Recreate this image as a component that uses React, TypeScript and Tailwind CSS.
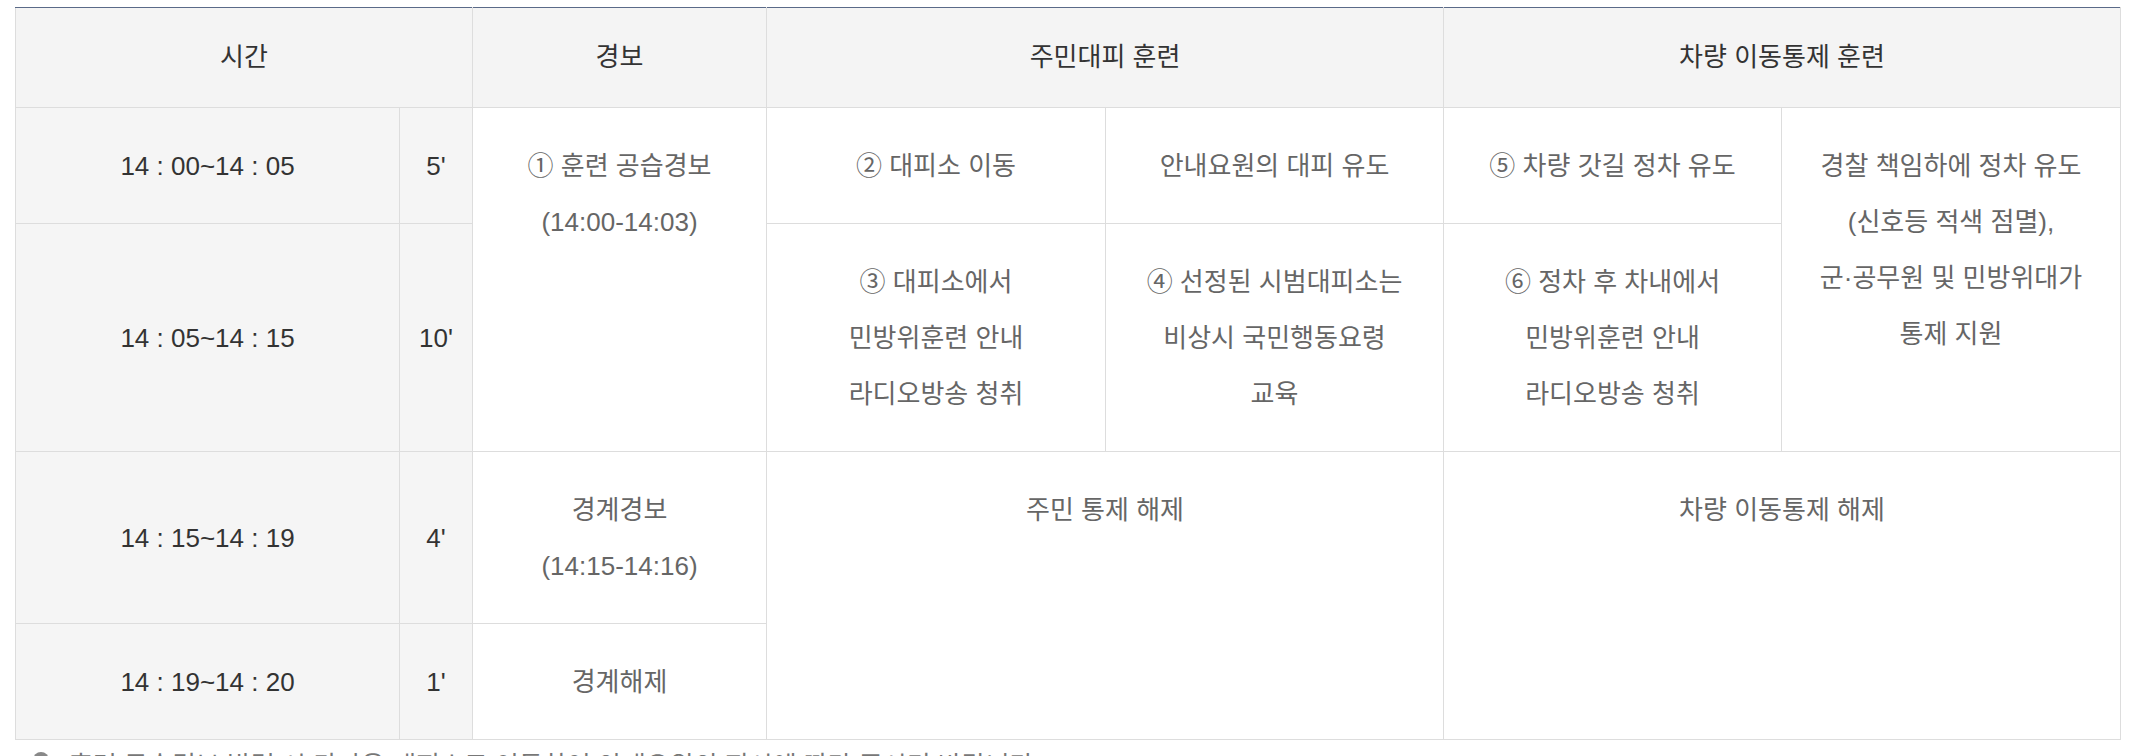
export default function App() {
  const th =
    "border border-[#dddddd] border-t-[#5a6a88] bg-[#f4f4f4] pt-[21px] pb-[22px] font-normal text-[#333333] align-middle";
  const tdTime =
    "border border-[#dddddd] bg-[#f5f5f5] text-[#333333] align-middle pt-[30px] pb-[29px] whitespace-nowrap";
  const td =
    "border border-[#dddddd] bg-white text-[#666666] align-top pt-[30px] pb-[29px] whitespace-nowrap";
  return (
    <div className="min-h-screen bg-white pt-[7px] pl-[15px] font-['Liberation_Sans','Noto_Sans_CJK_KR',sans-serif] text-[26px] leading-[56px]">
      <table className="w-[2105px] table-fixed border-collapse text-center">
        <colgroup>
          <col className="w-[384px]" />
          <col className="w-[73px]" />
          <col className="w-[294px]" />
          <col className="w-[339px]" />
          <col className="w-[338px]" />
          <col className="w-[338px]" />
          <col className="w-[339px]" />
        </colgroup>
        <thead>
          <tr>
            <th colSpan={2} className={th}>
              시간
            </th>
            <th className={th}>경보</th>
            <th colSpan={2} className={th}>
              주민대피 훈련
            </th>
            <th colSpan={2} className={th}>
              차량 이동통제 훈련
            </th>
          </tr>
        </thead>
        <tbody>
          <tr>
            <td className={tdTime}>14 : 00~14 : 05</td>
            <td className={tdTime}>5'</td>
            <td rowSpan={2} className={td}>
              ① 훈련 공습경보
              <br />
              (14:00-14:03)
            </td>
            <td className={td}>② 대피소 이동</td>
            <td className={td}>안내요원의 대피 유도</td>
            <td className={td}>⑤ 차량 갓길 정차 유도</td>
            <td rowSpan={2} className={td}>
              경찰 책임하에 정차 유도
              <br />
              (신호등 적색 점멸),
              <br />
              군·공무원 및 민방위대가
              <br />
              통제 지원
            </td>
          </tr>
          <tr>
            <td className={tdTime}>14 : 05~14 : 15</td>
            <td className={tdTime}>10'</td>
            <td className={td}>
              ③ 대피소에서
              <br />
              민방위훈련 안내
              <br />
              라디오방송 청취
            </td>
            <td className={td}>
              ④ 선정된 시범대피소는
              <br />
              비상시 국민행동요령
              <br />
              교육
            </td>
            <td className={td}>
              ⑥ 정차 후 차내에서
              <br />
              민방위훈련 안내
              <br />
              라디오방송 청취
            </td>
          </tr>
          <tr>
            <td className={tdTime}>14 : 15~14 : 19</td>
            <td className={tdTime}>4'</td>
            <td className={td}>
              경계경보
              <br />
              (14:15-14:16)
            </td>
            <td rowSpan={2} colSpan={2} className={td}>
              주민 통제 해제
            </td>
            <td rowSpan={2} colSpan={2} className={td}>
              차량 이동통제 해제
            </td>
          </tr>
          <tr>
            <td className={tdTime}>14 : 19~14 : 20</td>
            <td className={tdTime}>1'</td>
            <td className={td}>경계해제</td>
          </tr>
        </tbody>
      </table>
      <div className="mt-[8px] flex items-start gap-[20px] pl-[18px] text-[26px] leading-[36px] text-[#777777]">
        <span className="mt-[4px] inline-block h-[16px] w-[16px] shrink-0 rounded-full bg-[#888888]" />
        <span>훈련 공습경보 발령 시 가까운 대피소로 이동하여 안내요원의 지시에 따라 주시기 바랍니다.</span>
      </div>
    </div>
  );
}
